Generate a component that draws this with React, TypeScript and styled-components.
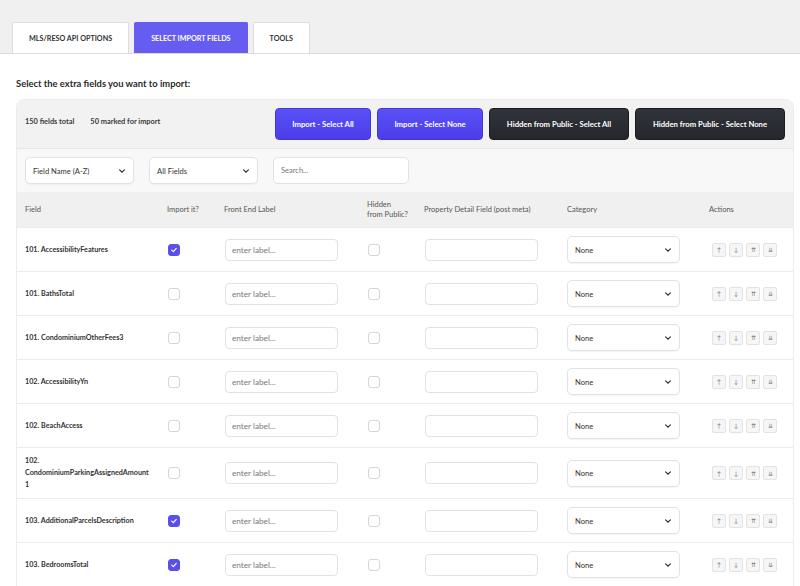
import React from 'react';
import styled, { createGlobalStyle } from 'styled-components';

const GlobalStyle = createGlobalStyle`
    body {
        margin: 0;
        background: #fff;
        font-family: Lato, 'Open Sans', sans-serif;
        color: #222;
    }
`;

const fields = [
    { name: '101. AccessibilityFeatures', checked: true },
    { name: '101. BathsTotal', checked: false },
    { name: '101. CondominiumOtherFees3', checked: false },
    { name: '102. AccessibilityYn', checked: false },
    { name: '102. BeachAccess', checked: false },
    { name: '102. CondominiumParkingAssignedAmount1', checked: false },
    { name: '103. AdditionalParcelsDescription', checked: true },
    { name: '103. BedroomsTotal', checked: true },
];

const Chevron = () => (
    <svg width="8" height="8" viewBox="0 0 10 10">
        <path d="M2 3.5 L5 6.5 L8 3.5" fill="none" stroke="#333" strokeWidth="1.5" strokeLinecap="round" />
    </svg>
);

const Check = ({ checked }: { checked: boolean }) => (
    <Box checked={checked}>
        {checked && (
            <svg width="8" height="8" viewBox="0 0 10 10">
                <path d="M2.2 5.2 L4.2 7 L7.8 3" fill="none" stroke="#fff" strokeWidth="1.5" strokeLinecap="round" strokeLinejoin="round" />
            </svg>
        )}
    </Box>
);

const App = () => {
    const rows = fields.map((field) => (
        <Row key={field.name}>
            <FieldName>{field.name}</FieldName>
            <div>
                <Check checked={field.checked} />
            </div>
            <div>
                <TextInput>enter label...</TextInput>
            </div>
            <div>
                <Check checked={false} />
            </div>
            <div>
                <TextInput />
            </div>
            <div>
                <Select width={113}>
                    None
                    <Chevron />
                </Select>
            </div>
            <Actions>
                <MoveButton>↑</MoveButton>
                <MoveButton>↓</MoveButton>
                <MoveButton>⇈</MoveButton>
                <MoveButton>⇊</MoveButton>
            </Actions>
        </Row>
    ));
    return (
        <>
            <GlobalStyle />
            <TopBar>
                <Tab>MLS/RESO API OPTIONS</Tab>
                <Tab active>SELECT IMPORT FIELDS</Tab>
                <Tab>TOOLS</Tab>
            </TopBar>
            <Main>
                <Title>Select the extra fields you want to import:</Title>
                <Card>
                    <Summary>
                        <Counts>
                            <span>150 fields total</span>
                            <span>50 marked for import</span>
                        </Counts>
                        <Buttons>
                            <ActionButton variant="primary" width={96}>Import - Select All</ActionButton>
                            <ActionButton variant="primary" width={106}>Import - Select None</ActionButton>
                            <ActionButton variant="dark" width={140}>Hidden from Public - Select All</ActionButton>
                            <ActionButton variant="dark" width={150}>Hidden from Public - Select None</ActionButton>
                        </Buttons>
                    </Summary>
                    <Filters>
                        <Select width={109}>
                            Field Name (A-Z)
                            <Chevron />
                        </Select>
                        <Select width={109}>
                            All Fields
                            <Chevron />
                        </Select>
                        <Search>Search...</Search>
                    </Filters>
                    <HeaderRow>
                        <span>Field</span>
                        <span>Import it?</span>
                        <span>Front End Label</span>
                        <span>
                            Hidden
                            <br />
                            from Public?
                        </span>
                        <span>Property Detail Field (post meta)</span>
                        <span>Category</span>
                        <span>Actions</span>
                    </HeaderRow>
                    {rows}
                </Card>
            </Main>
        </>
    );
};

const TopBar = styled.div`
    height: 54px;
    background: #f0f0f0;
    border-bottom: 1px solid #dcdcdc;
    display: flex;
    align-items: flex-end;
    gap: 5px;
    padding-left: 12px;
    box-sizing: border-box;
`;

const Tab = styled.div<{ active?: boolean }>`
    height: 30px;
    padding: 0 16px;
    display: flex;
    align-items: center;
    font-size: 7.2px;
    font-weight: 700;
    color: ${(props) => (props.active ? '#fff' : '#333')};
    background: ${(props) => (props.active ? '#675cf2' : '#fff')};
    border: 1px solid ${(props) => (props.active ? '#675cf2' : '#ddd')};
    border-bottom: none;
    border-radius: 2px 2px 0 0;
`;

const Main = styled.div`
    padding: 0 6px 0 16px;
`;

const Title = styled.h1`
    font-size: 9.4px;
    font-weight: 700;
    margin: 0;
    padding: 24px 0 9px;
    line-height: 12px;
    color: #2a2a2a;
`;

const Card = styled.div`
    border: 1px solid #ececec;
    border-radius: 8px 8px 0 0;
    overflow: hidden;
`;

const Summary = styled.div`
    height: 48px;
    background: #f2f2f2;
    border-bottom: 1px solid #e6e6e6;
    display: flex;
    align-items: center;
    justify-content: space-between;
    padding: 0 8px;
`;

const Counts = styled.div`
    display: flex;
    gap: 16px;
    font-size: 7.4px;
    font-weight: 700;
    color: #3a3a3a;
    margin-top: -6px;
`;

const Buttons = styled.div`
    display: flex;
    gap: 6px;
`;

const ActionButton = styled.div<{ variant: 'primary' | 'dark'; width: number }>`
    width: ${(props) => props.width}px;
    height: 32px;
    border-radius: 4px;
    display: flex;
    align-items: center;
    justify-content: center;
    font-size: 7.7px;
    font-weight: 700;
    color: #fff;
    box-sizing: border-box;
    background: ${(props) =>
        props.variant === 'primary'
            ? 'linear-gradient(#5a50f6, #4a3ee9)'
            : 'linear-gradient(#30333a, #25272c)'};
    border: 1px solid ${(props) => (props.variant === 'primary' ? '#4237d8' : '#1c1d20')};
`;

const Filters = styled.div`
    height: 43px;
    background: #f8f8f8;
    display: flex;
    align-items: center;
    gap: 15px;
    padding: 0 8px;
`;

const Select = styled.div<{ width: number }>`
    width: ${(props) => props.width}px;
    height: 27px;
    box-sizing: border-box;
    background: #fff;
    border: 1px solid #e2e2e2;
    border-radius: 5px;
    display: flex;
    align-items: center;
    justify-content: space-between;
    padding: 0 7px;
    font-size: 7.6px;
    color: #333;
    box-shadow: 0 1px 1px rgba(0, 0, 0, 0.04);
`;

const Search = styled.div`
    width: 136px;
    height: 27px;
    box-sizing: border-box;
    background: #fff;
    border: 1px solid #e2e2e2;
    border-radius: 5px;
    display: flex;
    align-items: center;
    padding: 0 7px;
    font-size: 7.5px;
    color: #777;
`;

const grid = `
    display: grid;
    grid-template-columns: 142px 57px 143px 57px 143px 142px 1fr;
    align-items: center;
    padding-left: 8px;
`;

const HeaderRow = styled.div`
    ${grid}
    height: 35px;
    background: #f0f0f0;
    font-size: 7.5px;
    color: #555;
    line-height: 10px;
`;

const Row = styled.div`
    ${grid}
    min-height: 44px;
    box-sizing: border-box;
    padding-top: 7px;
    padding-bottom: 7px;
    border-top: 1px solid #ebebeb;
    background: #fff;
`;

const FieldName = styled.div`
    font-size: 7.2px;
    font-weight: 700;
    line-height: 12px;
    color: #333;
    padding-right: 15px;
    overflow-wrap: anywhere;
`;

const Box = styled.div<{ checked: boolean }>`
    width: 12px;
    height: 12px;
    margin-left: 1px;
    box-sizing: border-box;
    border-radius: 3px;
    display: flex;
    align-items: center;
    justify-content: center;
    background: ${(props) => (props.checked ? '#5b4fe8' : '#fff')};
    border: 1px solid ${(props) => (props.checked ? '#5b4fe8' : '#d6d6d6')};
`;

const TextInput = styled.div`
    width: 113px;
    height: 22px;
    box-sizing: border-box;
    margin-left: 1px;
    border: 1px solid #e2e2e2;
    border-radius: 4px;
    background: #fff;
    display: flex;
    align-items: center;
    padding: 0 6px;
    font-size: 8.2px;
    color: #777;
`;

const Actions = styled.div`
    display: flex;
    gap: 3px;
    padding-left: 3px;
`;

const MoveButton = styled.div`
    width: 14px;
    height: 14px;
    box-sizing: border-box;
    border: 1px solid #e3e3e3;
    border-radius: 2px;
    background: #f6f6f6;
    display: flex;
    align-items: center;
    justify-content: center;
    font-size: 6px;
    color: #777;
`;

export default App;
